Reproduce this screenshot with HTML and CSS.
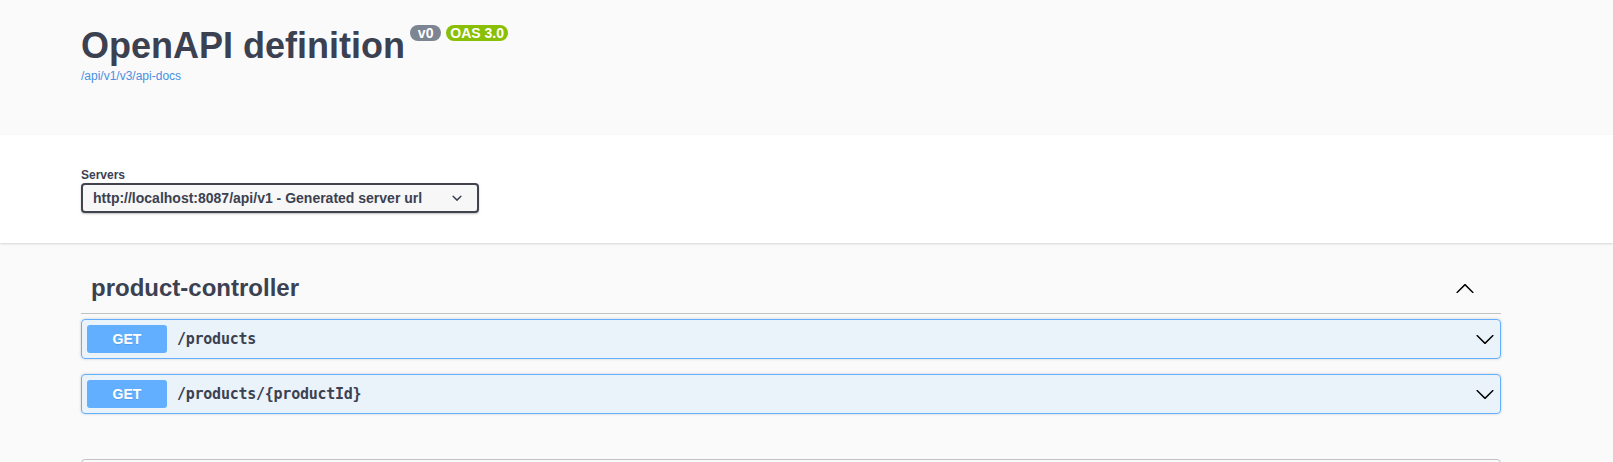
FILE: index.html
```html
<!DOCTYPE html>
<html lang="en">
<head>
<meta charset="utf-8">
<title>Swagger UI</title>
<link rel="stylesheet" href="styles.css">
</head>
<body>
<div class="swagger-ui">
  <div class="info-container">
    <div class="wrapper">
      <div class="info">
        <h2 class="title">
          <span>OpenAPI definition</span>
          <small class="badge version"><pre> v0 </pre></small>
          <small class="badge stamp"><pre>OAS 3.0</pre></small>
        </h2>
        <a class="link" href="#">/api/v1/v3/api-docs</a>
      </div>
    </div>
  </div>

  <div class="scheme-container">
    <div class="wrapper">
      <div class="servers">
        <span class="servers-title">Servers</span>
        <div class="server-select">
          <span>http://localhost:8087/api/v1 - Generated server url</span>
          <svg width="20" height="20" viewBox="0 0 20 20" aria-hidden="true"><path fill="#3b4151" d="M13.418 7.859a.695.695 0 01.978 0 .68.68 0 010 .969l-3.908 3.83a.697.697 0 01-.979 0l-3.908-3.83a.68.68 0 010-.969.695.695 0 01.978 0L10 11l3.418-3.141z"/></svg>
        </div>
      </div>
    </div>
  </div>

  <div class="wrapper">
    <div class="tag-section">
      <h3 class="opblock-tag">
        <span class="tag-name">product-controller</span>
        <button class="expand" aria-label="collapse">
          <svg width="20" height="20" viewBox="0 0 20 20"><path fill="#000" d="M17.418 14.908c.272.268.709.268.979 0 .27-.268.271-.701 0-.969l-7.908-7.83c-.27-.268-.707-.268-.979 0l-7.908 7.83c-.27.268-.27.701 0 .969.271.268.709.268.979 0L10 7.767l7.418 7.141z"/></svg>
        </button>
      </h3>

      <div class="opblock">
        <div class="summary">
          <span class="method">GET</span>
          <span class="path">/products</span>
          <svg class="arrow" width="20" height="20" viewBox="0 0 20 20"><path fill="#000" d="M17.418 6.109c.272-.268.709-.268.979 0s.271.701 0 .969l-7.908 7.83c-.27.268-.707.268-.979 0l-7.908-7.83c-.27-.268-.27-.701 0-.969.271-.268.709-.268.979 0L10 13.25l7.418-7.141z"/></svg>
        </div>
      </div>

      <div class="opblock">
        <div class="summary">
          <span class="method">GET</span>
          <span class="path">/products/{productId}</span>
          <svg class="arrow" width="20" height="20" viewBox="0 0 20 20"><path fill="#000" d="M17.418 6.109c.272-.268.709-.268.979 0s.271.701 0 .969l-7.908 7.83c-.27.268-.707.268-.979 0l-7.908-7.83c-.27-.268-.27-.701 0-.969.271-.268.709-.268.979 0L10 13.25l7.418-7.141z"/></svg>
        </div>
      </div>
    </div>

    <section class="models" aria-label="Schemas"></section>
  </div>
</div>
</body>
</html>
```

FILE: styles.css
```css
html {
  overflow: hidden;
}

body {
  margin: 0;
  background: #fafafa;
  font-family: "Liberation Sans", Arial, sans-serif;
  color: #3b4151;
}

.wrapper {
  width: 1460px;
  margin-left: 61px;
  padding: 0 20px;
  box-sizing: border-box;
}

/* header / info */
.info-container {
  height: 135px;
}

.info {
  padding-top: 25px;
}

.title {
  display: flex;
  align-items: flex-start;
  margin: 0;
  font-size: 36px;
  line-height: 41px;
  font-weight: 700;
  color: #3b4151;
}

.badge {
  margin-left: 5px;
  padding: 2px 4px;
  border-radius: 57px;
  background: #7d8492;
}

.badge.stamp {
  background: #89bf04;
}

.badge pre {
  margin: 0;
  font-family: "Liberation Sans", Arial, sans-serif;
  font-size: 14px;
  line-height: 12px;
  font-weight: 700;
  color: #fff;
}

.link {
  display: block;
  margin-top: 3px;
  font-size: 12px;
  line-height: 14px;
  color: #4990e2;
  text-decoration: none;
}

/* servers */
.scheme-container {
  background: #fff;
  box-shadow: 0 1px 2px 0 rgba(0, 0, 0, 0.15);
  padding: 33px 0 30px;
  margin-bottom: 20px;
}

.servers {
  display: flex;
  flex-direction: column;
  align-items: flex-start;
}

.servers-title {
  font-size: 12px;
  line-height: 14px;
  font-weight: 700;
  margin-bottom: 1px;
}

.server-select {
  display: flex;
  align-items: center;
  justify-content: space-between;
  box-sizing: border-box;
  width: 398px;
  height: 30px;
  padding: 0 10px;
  border: 2px solid #41444e;
  border-radius: 4px;
  background: #f7f7f7;
  box-shadow: 0 1px 2px 0 rgba(0, 0, 0, 0.25);
  font-size: 14px;
  line-height: 16px;
  font-weight: 700;
  color: #3b4151;
}

/* tag section */
.tag-section {
  display: flex;
  flex-direction: column;
}

.opblock-tag {
  display: flex;
  align-items: center;
  justify-content: space-between;
  margin: 0 0 5px;
  padding: 10px 26px 10px 10px;
  border-bottom: 1px solid rgba(59, 65, 81, 0.3);
  font-size: 24px;
  line-height: 30px;
  font-weight: 700;
  color: #3b4151;
}

.expand {
  display: flex;
  padding: 0;
  border: none;
  background: none;
}

.opblock {
  margin-bottom: 15px;
  border: 1px solid #61affe;
  border-radius: 4px;
  background: rgba(97, 175, 254, 0.1);
  box-shadow: 0 0 3px rgba(0, 0, 0, 0.19);
}

.summary {
  display: flex;
  align-items: center;
  padding: 5px;
}

.method {
  min-width: 80px;
  height: 28px;
  line-height: 28px;
  border-radius: 3px;
  background: #61affe;
  color: #fff;
  font-size: 14px;
  font-weight: 700;
  text-align: center;
  text-shadow: 0 1px 0 rgba(0, 0, 0, 0.1);
}

.path {
  flex: 1;
  padding: 0 10px;
  font-family: "DejaVu Sans Mono", "Liberation Mono", monospace;
  font-size: 15px;
  letter-spacing: -0.25px;
  font-weight: 700;
  color: #3b4151;
}

.arrow {
  flex: none;
}

/* models */
.models {
  height: 50px;
  margin: 30px 0;
  border: 1px solid rgba(59, 65, 81, 0.3);
  border-radius: 4px;
}
```
